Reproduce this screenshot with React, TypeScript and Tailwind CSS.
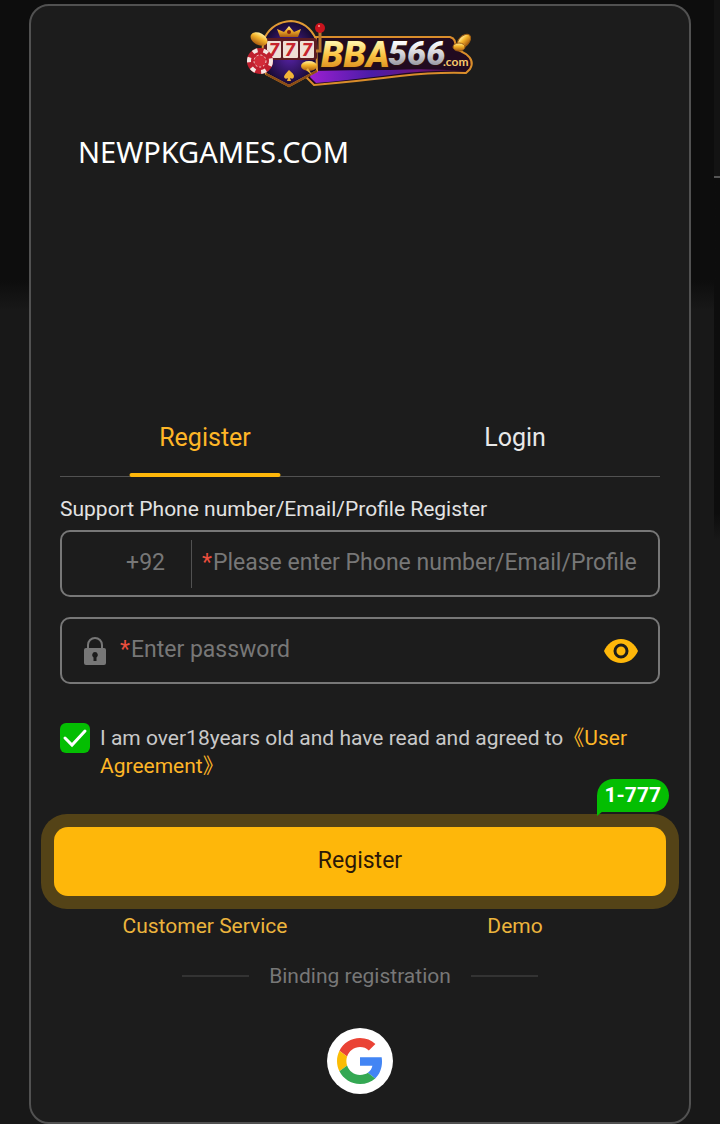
import { useState } from 'react';

function Logo() {
  return (
    <svg viewBox="0 0 240 85" className="h-[85px] w-[240px]" role="img" aria-label="BBA566.com">
      <defs>
        <linearGradient id="gold" x1="0" y1="0" x2="0" y2="1">
          <stop offset="0" stopColor="#fff0a0" />
          <stop offset="0.4" stopColor="#f6b62c" />
          <stop offset="1" stopColor="#a85a10" />
        </linearGradient>
        <linearGradient id="letters" x1="0" y1="0" x2="0" y2="1">
          <stop offset="0.2" stopColor="#fff3a8" />
          <stop offset="0.5" stopColor="#fbc443" />
          <stop offset="0.85" stopColor="#d98a1c" />
        </linearGradient>
        <linearGradient id="silver" x1="0" y1="0" x2="0" y2="1">
          <stop offset="0.2" stopColor="#ffffff" />
          <stop offset="0.55" stopColor="#cfcfd6" />
          <stop offset="0.85" stopColor="#8d8d98" />
        </linearGradient>
        <linearGradient id="swoosh" x1="0" y1="0" x2="1" y2="0">
          <stop offset="0" stopColor="#9b1fd0" />
          <stop offset="0.4" stopColor="#4a1ca8" />
          <stop offset="0.7" stopColor="#6c1580" />
          <stop offset="1" stopColor="#3c0e2c" />
        </linearGradient>
        <radialGradient id="badge">
          <stop offset="0" stopColor="#5c24b0" />
          <stop offset="1" stopColor="#160a30" />
        </radialGradient>
      </defs>

      {/* banner */}
      <path d="M74 27H210Q217 29 215 38L226 44Q235 51 230 59L226 63Q196 62 160 66Q120 71 74 75L67 68Z" fill="#210a20" stroke="#d98d2b" strokeWidth="2" />
      <path d="M72 61Q110 60 150 60Q190 58 224 61Q186 60 150 65Q110 70 76 73L70 67Z" fill="url(#swoosh)" />

      {/* round badge */}
      <path d="M25 27Q33 12 51 11Q68 12 76 29L77 61L49 76L26 64Q19 45 25 27Z" fill="url(#badge)" stroke="#e09a34" strokeWidth="2" />
      <path d="M26 64L49 76L77 61" fill="none" stroke="#8b4c15" strokeWidth="2" />
      <path d="M37 19L44 22L49 16L54 22L61 19L58 27H40Z" fill="url(#gold)" />
      <circle cx="49" cy="22" r="2" fill="#812010" />
      <rect x="24" y="28" width="53" height="22" rx="3" fill="#5c1c22" />
      <rect x="27" y="31" width="14" height="17" rx="1" fill="#eedfd6" />
      <rect x="43" y="31" width="15" height="17" rx="1" fill="#eedfd6" />
      <rect x="60" y="31" width="14" height="17" rx="1" fill="#eedfd6" />
      <g fill="#c6232c" fontFamily="Roboto, sans-serif" fontSize="18" fontWeight="900" fontStyle="italic" textAnchor="middle">
        <text x="34" y="46">7</text>
        <text x="50" y="46">7</text>
        <text x="67" y="46">7</text>
      </g>
      <path d="M80 20V41H76" fill="none" stroke="#b9772c" strokeWidth="3" />
      <circle cx="80" cy="18" r="5" fill="#c9141e" />
      <circle cx="79" cy="16" r="1" fill="#ff9a94" />

      {/* chip, coins and spade */}
      <circle cx="20" cy="51" r="13" fill="#c01f2e" />
      <circle cx="20" cy="51" r="11" fill="none" stroke="#f5e6e2" strokeWidth="4" strokeDasharray="5 6" />
      <circle cx="20" cy="51" r="6" fill="#d32b38" stroke="#f5dcd8" strokeDasharray="2 2" />
      <ellipse cx="19" cy="29" rx="9" ry="6" fill="url(#gold)" transform="rotate(28 19 29)" />
      <ellipse cx="69" cy="56" rx="8" ry="5" fill="url(#gold)" />
      <path d="M66 60L72 65L68 58Z" fill="#e9b23c" />
      <path d="M49 60Q44 65 44 67Q45 70 48 68L47 71H51L50 68Q54 70 54 66Q54 64 49 60Z" fill="#f2b437" />
      <ellipse cx="224" cy="31" rx="8" ry="5" fill="url(#gold)" stroke="#9c5d13" transform="rotate(-45 224 31)" />
      <ellipse cx="219" cy="37" rx="6" ry="4" fill="url(#gold)" stroke="#9c5d13" />

      <g fontFamily="Roboto, sans-serif" fontWeight="900" fontStyle="italic" stroke="#2a1010" strokeWidth="2" paintOrder="stroke">
        <text x="81" y="57" fontSize="36" fill="url(#letters)">BBA</text>
        <text x="148" y="55" fontSize="34" fill="url(#silver)">566</text>
      </g>
      <text x="203" y="56" fontFamily="Lato, sans-serif" fontSize="12" fontWeight="700" fill="#f8c96c">.com</text>
    </svg>
  );
}

function LockIcon() {
  return (
    <svg viewBox="0 0 22 28" className="h-7 w-[22px] shrink-0" aria-hidden="true">
      <path d="M4 13V8a7 7 0 0 1 14 0v5" fill="none" stroke="#777" strokeWidth="2" />
      <rect y="11" width="22" height="17" rx="2" fill="#777" />
      <path d="M11 15a3 3 0 0 1 1.500 5.500V24h-3v-3.500A3 3 0 0 1 11 15Z" fill="#1c1c1c" />
    </svg>
  );
}

function EyeIcon() {
  return (
    <svg viewBox="0 0 34 24" className="block h-6 w-[34px]" aria-hidden="true">
      <path d="M17 0C9 0 3 5 0 12c3 7 9 12 17 12s14-5 17-12C31 5 25 0 17 0Z" fill="#feb70a" />
      <circle cx="17" cy="12" r="6" fill="#feb70a" stroke="#1c1c1c" strokeWidth="3" />
    </svg>
  );
}

function GoogleIcon() {
  return (
    <svg viewBox="0 0 48 48" className="size-[46px]" aria-hidden="true">
      <path fill="#EA4335" d="M24 9.500c3.540 0 6.710 1.220 9.210 3.600l6.850-6.850C35.900 2.380 30.470 0 24 0 14.620 0 6.510 5.380 2.560 13.220l7.980 6.190C12.430 13.720 17.740 9.500 24 9.500z" />
      <path fill="#4285F4" d="M46.980 24.550c0-1.570-.15-3.090-.38-4.550H24v9.020h12.940c-.58 2.960-2.260 5.480-4.780 7.180l7.730 6c4.510-4.180 7.090-10.360 7.090-17.650z" />
      <path fill="#FBBC05" d="M10.530 28.590c-.48-1.450-.76-2.990-.76-4.590s.27-3.140.76-4.590l-7.980-6.190C.92 16.460 0 20.120 0 24c0 3.880.92 7.540 2.560 10.780l7.970-6.190z" />
      <path fill="#34A853" d="M24 48c6.480 0 11.930-2.130 15.890-5.810l-7.730-6c-2.150 1.450-4.920 2.300-8.160 2.300-6.260 0-11.570-4.220-13.470-9.910l-7.980 6.190C6.510 42.620 14.620 48 24 48z" />
    </svg>
  );
}

export default function App() {
  const [agreed, setAgreed] = useState(true);
  const [showPassword, setShowPassword] = useState(false);

  return (
    <div className="relative min-h-screen overflow-hidden bg-[#181818] bg-[linear-gradient(#0d0d0d_280px,#181818_310px)] pt-1 font-[Roboto,'Noto_Sans_CJK_SC',sans-serif]">
      {/* Edge of the page behind the dialog */}
      <div className="absolute top-0 right-0 h-[540px] w-[6px] bg-linear-to-b from-[#0d0d0d] from-95% to-[#181818]">
        <div className="h-[178px] border-b-2 border-[#555] bg-[#131313]" />
      </div>

      <main className="relative mx-[29px] rounded-[20px] border-2 border-[#515151] bg-[#1c1c1c] px-[29px] pb-7">
        <header className="flex justify-center pt-1">
          <Logo />
        </header>

        <h1 className="mt-9 ml-[18px] h-[276px] font-['Noto_Sans',sans-serif] text-[29px] leading-[42px] text-white">NEWPKGAMES.COM</h1>

        <div role="tablist" className="flex gap-5 border-b border-[#515151] text-[25px] leading-8">
          <button role="tab" aria-selected="true" className="relative h-[69px] flex-1 pb-2 text-[#feb627]">
            Register
            <span className="absolute -bottom-px left-1/2 h-1 w-[151px] -translate-x-1/2 rounded-sm bg-[#feb70a]" />
          </button>
          <button role="tab" aria-selected="false" className="h-[69px] flex-1 pb-2 text-[#e8e8e8]">Login</button>
        </div>

        <form onSubmit={(e) => e.preventDefault()}>
          <label htmlFor="account" className="mt-[18px] block text-[21px] leading-7 text-[#e3e3e3]">
            Support Phone number/Email/Profile Register
          </label>
          <div className="mt-[7px] flex h-[67px] items-center rounded-[10px] border-2 border-[#777] text-[23px] text-[#777]">
            <button type="button" aria-label="Country code" className="h-12 w-[130px] shrink-0 border-r border-[#515151] pr-[26px] text-right">+92</button>
            <span className="pl-[10px] text-[#ea4e3d]">*</span>
            <input
              id="account"
              type="text"
              placeholder="Please enter Phone number/Email/Profile"
              className="min-w-0 flex-1 bg-transparent pl-px placeholder:text-[#777] focus:outline-none"
            />
          </div>

          <div className="mt-5 flex h-[67px] items-center rounded-[10px] border-2 border-[#777] pr-5 pl-[22px] text-[23px] text-[#777]">
            <LockIcon />
            <span className="pl-[14px] text-[#ea4e3d]">*</span>
            <input
              type={showPassword ? 'text' : 'password'}
              aria-label="Password"
              placeholder="Enter password"
              className="min-w-0 flex-1 bg-transparent pl-px placeholder:text-[#777] focus:outline-none"
            />
            <button type="button" aria-label="Show password" onClick={() => setShowPassword(!showPassword)}>
              <EyeIcon />
            </button>
          </div>

          <div className="mt-[39px] flex items-start gap-[10px]">
            <span className="relative size-[30px] shrink-0">
              <input
                id="agree"
                type="checkbox"
                checked={agreed}
                onChange={(e) => setAgreed(e.target.checked)}
                className="block size-[30px] appearance-none rounded-md bg-[#04be02]"
              />
              {agreed && (
                <svg viewBox="0 0 30 30" className="pointer-events-none absolute inset-0" aria-hidden="true">
                  <path d="M5 15l7 7L25 8" fill="none" stroke="#fff" strokeWidth="3" strokeLinecap="round" />
                </svg>
              )}
            </span>
            <label htmlFor="agree" className="pt-px text-[21px] leading-7 text-[#c9c9c9]">
              I am over18years old and have read and agreed to
              <a href="#agreement" className="text-[#feb627]">《User Agreement》</a>
            </label>
          </div>

          <div className="relative -mx-[19px] mt-[34px] rounded-[26px] bg-[#544317] p-[13px]">
            <button type="submit" className="block h-[69px] w-full rounded-[14px] bg-[#feb70a] text-[23px] text-[#2b1708]">Register</button>
            <div className="absolute -top-[35px] right-[10px] h-[33px] rounded-t-[17px] rounded-br-[17px] bg-[#04be02] px-2 text-[21px] leading-8 font-bold text-white">
              1-777
              <svg viewBox="0 0 6 5" className="absolute top-[32px] left-0 h-[5px] w-[6px]" aria-hidden="true">
                <path d="M0 0h6L0 5Z" fill="#04be02" />
              </svg>
            </div>
          </div>
        </form>

        <div className="mt-[3px] flex gap-5 text-center text-[21px] leading-7 text-[#ecb43c]">
          <span className="flex-1"><a href="#service">Customer Service</a></span>
          <span className="flex-1"><a href="#demo">Demo</a></span>
        </div>

        <div className="mt-[22px] flex items-center justify-center gap-5 text-[21px] leading-7 text-[#777]">
          <span className="h-0.5 w-[67px] bg-[#333]" />
          Binding registration
          <span className="h-0.5 w-[67px] bg-[#333]" />
        </div>

        <div className="mt-[38px] flex justify-center">
          <button aria-label="Google" className="flex size-[66px] items-center justify-center rounded-full bg-white">
            <GoogleIcon />
          </button>
        </div>
      </main>
    </div>
  );
}
